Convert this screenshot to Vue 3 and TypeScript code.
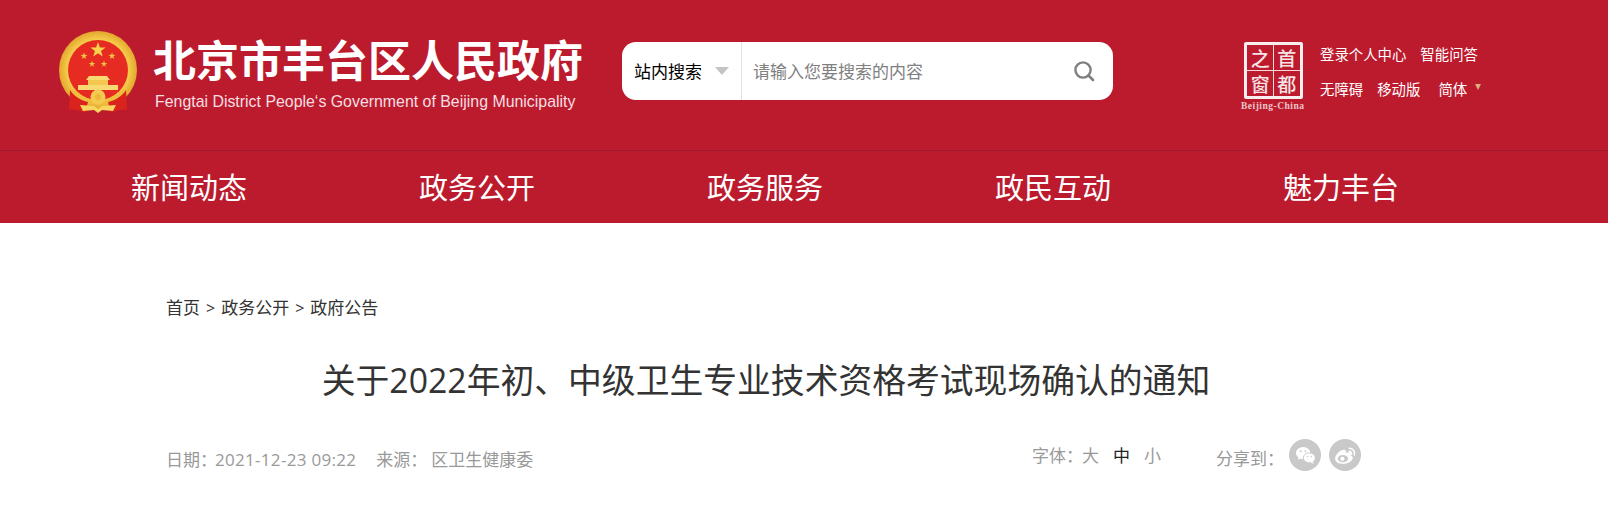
<template>
  <div class="page">
    <header class="top">
      <div class="brand">
        <svg class="emblem" viewBox="0 0 80 86" width="80" height="86">
          <defs>
            <radialGradient id="ring" cx="50%" cy="50%" r="50%">
              <stop offset="0.75" stop-color="#f8d24e" />
              <stop offset="1" stop-color="#e3a62e" />
            </radialGradient>
          </defs>
          <circle cx="40" cy="40" r="39" fill="url(#ring)" />
          <circle cx="40" cy="40" r="30" fill="#e62c22" />
          <polygon :points="star(40, 20, 8)" fill="#f8d34e" />
          <polygon :points="star(26, 26, 3.600)" fill="#f0c340" />
          <polygon :points="star(54, 26, 3.600)" fill="#f0c340" />
          <polygon :points="star(34, 34, 3.400)" fill="#f0c340" />
          <polygon :points="star(46, 34, 3.400)" fill="#f0c340" />
          <path d="M31 46h18l3 4H28z" fill="#f9d971" />
          <path d="M30 50h20v5H30z" fill="#f4c850" />
          <path d="M20 55h40v5H20z" fill="#f9d971" />
          <path d="M12 60c4 6 10 10 18 12l-3 11c-5-3-10-4-16-3z" fill="#d9231c" />
          <path d="M68 60c-4 6-10 10-18 12l3 11c5-3 10-4 16-3z" fill="#d9231c" />
          <path d="M14 60Q40 84 66 60" fill="none" stroke="#f0bd3c" stroke-width="2.500" />
          <circle cx="40" cy="67" r="7.500" fill="#f4c94f" />
          <circle cx="40" cy="67" r="3" fill="#eeb73a" />
          <path d="M22 75l14 1 4 3 4-3 14-1-3 6-11-1-4 3-4-3-11 1z" fill="#f8d55e" />
        </svg>
        <div class="brand-text">
          <div class="brand-name">北京市丰台区人民政府</div>
          <div class="brand-en">Fengtai District People‘s Government of Beijing Municipality</div>
        </div>
      </div>

      <div class="search">
        <div class="search-scope">
          <span>站内搜索</span>
          <i class="caret"></i>
        </div>
        <div class="search-input">请输入您要搜索的内容</div>
        <svg class="search-icon" viewBox="0 0 22 22" width="22" height="22">
          <circle cx="10" cy="10" r="7.600" fill="none" stroke="#7f7f7f" stroke-width="2.400" />
          <path d="M15.500 15.500l4.500 4.500" stroke="#7f7f7f" stroke-width="2.600" stroke-linecap="round" />
        </svg>
      </div>

      <div class="seal">
        <div class="seal-box">
          <span>之</span><span>首</span><span>窗</span><span>都</span>
        </div>
        <div class="seal-en">Beijing-China</div>
      </div>

      <div class="links">
        <div class="links-row first">
          <span>登录个人中心</span>
          <span>智能问答</span>
        </div>
        <div class="links-row second">
          <span>无障碍</span>
          <span>移动版</span>
          <span class="lang">简体</span>
          <i class="lang-caret"></i>
        </div>
      </div>
    </header>

    <nav class="nav">
      <a v-for="item in navItems" :key="item" class="nav-item">{{ item }}</a>
    </nav>

    <main class="content">
      <div class="crumbs">
        <span>首页</span><i>&gt;</i><span>政务公开</span><i>&gt;</i><span>政府公告</span>
      </div>
      <h1 class="title">关于2022年初、中级卫生专业技术资格考试现场确认的通知</h1>
      <div class="meta">
        <div class="meta-left">
          <span class="date-label">日期：</span><span class="date">2021-12-23 09:22</span>
          <span class="source">来源：</span>
          <span class="org">区卫生健康委</span>
        </div>
        <div class="font-size">
          <span class="font-label">字体：</span>
          <span class="size">大</span>
          <span class="size on">中</span>
          <span class="size">小</span>
        </div>
        <div class="share">
          <span class="share-label">分享到：</span>
          <span class="share-btn">
            <svg viewBox="0 0 24 24" width="23" height="23">
              <ellipse cx="9.500" cy="9.500" rx="7.500" ry="6.300" fill="#fff" />
              <path d="M5 13.500l-1 3 3.500-1.700z" fill="#fff" />
              <ellipse cx="16" cy="14.500" rx="6.300" ry="5.200" fill="#fff" stroke="#c9c9c9" stroke-width="1" />
              <path d="M19.500 18l1 2.500-3-1.300z" fill="#fff" />
              <circle cx="7" cy="7.500" r="1" fill="#c9c9c9" />
              <circle cx="12" cy="7.500" r="1" fill="#c9c9c9" />
              <circle cx="14" cy="13" r=".8" fill="#c9c9c9" />
              <circle cx="18" cy="13" r=".8" fill="#c9c9c9" />
            </svg>
          </span>
          <span class="share-btn">
            <svg viewBox="0 0 24 24" width="25" height="25">
              <path d="M10 20c-4.500 0-8-2-8-5 0-3.500 5-8.500 8.500-8.500 2 0 2.300 1.500 1.800 3 2.500-1 5-.8 5 1.200 0 .6-.1 1-.4 1.400 1.300.4 2.100 1.200 2.100 2.600C18.500 17.500 14.500 20 10 20z" fill="#fff" />
              <ellipse cx="9.500" cy="15" rx="5" ry="3.400" fill="#c9c9c9" />
              <circle cx="9" cy="15.200" r="2" fill="#fff" />
              <path d="M15.500 5a5 5 0 0 1 5 6.500M15.500 8a2.200 2.200 0 0 1 2.200 2.800" fill="none" stroke="#fff" stroke-width="1.500" stroke-linecap="round" />
            </svg>
          </span>
        </div>
      </div>
    </main>
  </div>
</template>

<script setup lang="ts">
const navItems = ['新闻动态', '政务公开', '政务服务', '政民互动', '魅力丰台']

// five-pointed star around (cx, cy)
function star(cx: number, cy: number, r: number): string {
  const pts: string[] = []
  for (let i = 0; i < 10; i++) {
    const radius = i % 2 === 0 ? r : r * 0.4
    const a = (Math.PI / 5) * i - Math.PI / 2
    pts.push(`${(cx + radius * Math.cos(a)).toFixed(2)},${(cy + radius * Math.sin(a)).toFixed(2)}`)
  }
  return pts.join(' ')
}
</script>

<style>
body {
  background: #fff;
  overflow: hidden;
}
</style>

<style scoped>
.page {
  font-family: "Open Sans", "Noto Sans CJK SC", sans-serif;
  height: 513px;
  overflow: hidden;
}

.top {
  height: 151px;
  box-sizing: border-box;
  background: #bc1b2e;
  display: flex;
  align-items: flex-start;
  padding-left: 58px;
  border-bottom: 1px solid #9f172a;
}

.brand {
  display: flex;
  width: 564px;
  padding-top: 30px;
}

.emblem {
  flex: none;
}

.brand-text {
  margin-left: 15px;
  color: #fff;
}

.brand-name {
  font-family: "Noto Sans CJK SC", sans-serif;
  font-size: 43px;
  font-weight: 700;
  line-height: 50px;
  margin-top: 3px;
  white-space: nowrap;
}

.brand-en {
  font-family: "Liberation Sans", sans-serif;
  font-size: 15.900px;
  line-height: 18px;
  margin: 10px 0 0 2px;
  color: #f6dfe2;
  white-space: nowrap;
}

.search {
  margin-top: 42px;
  width: 491px;
  height: 58px;
  background: #fff;
  border-radius: 14px;
  display: flex;
  align-items: center;
  flex: none;
}

.search-scope {
  width: 120px;
  height: 100%;
  box-sizing: border-box;
  border-right: 1px solid #e2e2e2;
  padding: 0 0 2px 12px;
  display: flex;
  align-items: center;
  font-size: 17px;
  color: #000;
}

.caret {
  margin: 2px 0 0 13px;
  border-style: solid;
  border-width: 8px 7.500px 0;
  border-color: #c4c4c4 transparent transparent;
}

.search-input {
  flex: 1;
  padding: 0 0 2px 11px;
  font-size: 17px;
  color: #808080;
}

.search-icon {
  margin-right: 18px;
}

.seal {
  margin: 42px 0 0 128px;
  width: 69px;
  flex: none;
}

.seal-box {
  width: 53px;
  height: 51px;
  margin-left: 3px;
  border: 3px solid #f8eef0;
  border-radius: 2px;
  display: grid;
  grid-template-columns: 1fr 1fr;
  grid-template-rows: 1fr 1fr;
  background:
    linear-gradient(#f3d8dc, #f3d8dc) center / 100% 1px no-repeat,
    linear-gradient(#f3d8dc, #f3d8dc) center / 1px 100% no-repeat;
}

.seal-box span {
  font-family: "Noto Sans CJK SC", sans-serif;
  font-size: 19px;
  font-weight: 500;
  line-height: 25px;
  text-align: center;
  color: #f6e3e6;
}

.seal-en {
  font-family: "Liberation Serif", serif;
  font-size: 9.500px;
  font-weight: 700;
  line-height: 10px;
  margin-top: 2px;
  letter-spacing: 0.500px;
  color: #ecc6cb;
  white-space: nowrap;
}

.links {
  margin: 0 0 0 10px;
  font-family: "Noto Sans CJK SC", sans-serif;
  color: #fff;
  font-size: 14.400px;
  line-height: 20px;
  white-space: nowrap;
}

.links-row {
  display: flex;
  align-items: center;
}

.links-row.first {
  margin-top: 44px;
  gap: 14px;
}

.links-row.second {
  margin-top: 15px;
  gap: 14px;
}

.lang {
  margin-left: 4px;
}

.lang-caret {
  margin: -4px 0 0 -6px;
  border-style: solid;
  border-width: 6px 3px 0;
  border-color: #d9b07a transparent transparent;
}

.nav {
  height: 72px;
  background: #bc1b2e;
  display: flex;
  padding-left: 45px;
}

.nav-item {
  width: 288px;
  height: 72px;
  box-sizing: border-box;
  padding-top: 2px;
  text-align: center;
  color: #fff;
  font-size: 29px;
  line-height: 70px;
}

.content {
  width: 1200px;
  margin-left: 166px;
}

.crumbs {
  margin-top: 74px;
  font-size: 17px;
  line-height: 22px;
  color: #333;
  display: flex;
}

.crumbs i {
  font-style: normal;
  font-size: 16px;
  margin: 0 6px;
}

.title {
  margin: 38px 0 0;
  font-size: 33.800px;
  font-weight: 400;
  line-height: 46px;
  text-align: center;
  color: #333;
}

.meta {
  display: flex;
  align-items: flex-start;
  margin-top: 33px;
  font-size: 17px;
  line-height: 24px;
  color: #999;
  height: 40px;
}

.meta-left {
  flex: none;
  width: 866px;
  padding-top: 12px;
  white-space: nowrap;
}

.date-label {
  margin-right: -2px;
}

.date {
  letter-spacing: 0.300px;
}

.source {
  margin-left: 20px;
}

.org {
  margin-left: 4px;
}

.font-size {
  flex: none;
  width: 184px;
  padding-top: 8px;
  display: flex;
}

.size {
  margin-right: 14px;
}

.font-label {
  margin-right: -1px;
}

.size.on {
  color: #222;
}

.share {
  flex: none;
  display: flex;
  align-items: flex-start;
}

.share-label {
  padding-top: 11px;
  width: 73px;
}

.share-btn {
  width: 32px;
  height: 32px;
  margin-top: 3px;
  border-radius: 50%;
  background: #c9c9c9;
  margin-right: 8px;
  display: flex;
  align-items: center;
  justify-content: center;
}
</style>
